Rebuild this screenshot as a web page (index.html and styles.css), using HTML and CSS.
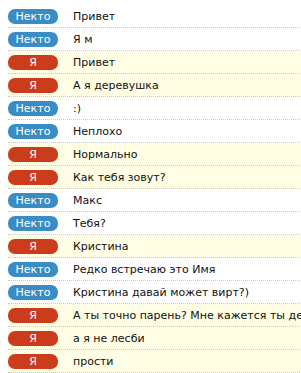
FILE: index.html
```
<!DOCTYPE html>
<html lang="ru">
<head>
    <meta charset="UTF-8">
    <title>Чат</title>
    <link rel="stylesheet" href="styles.css">
</head>
<body>
    <div class="log">
        <div class="msg"><span class="who stranger">Некто</span><span class="text">Привет</span></div>
        <div class="msg"><span class="who stranger">Некто</span><span class="text">Я м</span></div>
        <div class="msg me"><span class="who self">Я</span><span class="text">Привет</span></div>
        <div class="msg me"><span class="who self">Я</span><span class="text">А я деревушка</span></div>
        <div class="msg"><span class="who stranger">Некто</span><span class="text">:)</span></div>
        <div class="msg"><span class="who stranger">Некто</span><span class="text">Неплохо</span></div>
        <div class="msg me"><span class="who self">Я</span><span class="text">Нормально</span></div>
        <div class="msg me"><span class="who self">Я</span><span class="text">Как тебя зовут?</span></div>
        <div class="msg"><span class="who stranger">Некто</span><span class="text">Макс</span></div>
        <div class="msg"><span class="who stranger">Некто</span><span class="text">Тебя?</span></div>
        <div class="msg me"><span class="who self">Я</span><span class="text">Кристина</span></div>
        <div class="msg"><span class="who stranger">Некто</span><span class="text">Редко встречаю это Имя</span></div>
        <div class="msg"><span class="who stranger">Некто</span><span class="text">Кристина давай может вирт?)</span></div>
        <div class="msg me"><span class="who self">Я</span><span class="text">А ты точно парень? Мне кажется ты девушка</span></div>
        <div class="msg me"><span class="who self">Я</span><span class="text">а я не лесби</span></div>
        <div class="msg me"><span class="who self">Я</span><span class="text">прости</span></div>
    </div>
</body>
</html>
```
FILE: styles.css
```
* {
    margin: 0;
    padding: 0;
    box-sizing: border-box;
}
body {
    background: white;
    padding: 5px 0 0 8px;
    overflow: hidden;
    font-family: "DejaVu Sans", sans-serif;
    font-size: 11px;
    color: #111;
}
.log {
    width: 400px;
}
/* одна строка переписки */
.msg {
    display: flex;
    align-items: center;
    height: 23px;
    border-bottom: 1px dotted #c8c8c8;
    white-space: nowrap;
}
.msg.me {
    background: #fffde3;
}
.who {
    flex: none;
    width: 50px;
    height: 15px;
    border-radius: 7px;
    color: white;
    font-size: 11px;
    line-height: 15px;
    text-align: center;
}
.stranger {
    background: #3a8cc4;
}
.self {
    background: #cb3c1d;
}
.text {
    margin-left: 15px;
}
```
